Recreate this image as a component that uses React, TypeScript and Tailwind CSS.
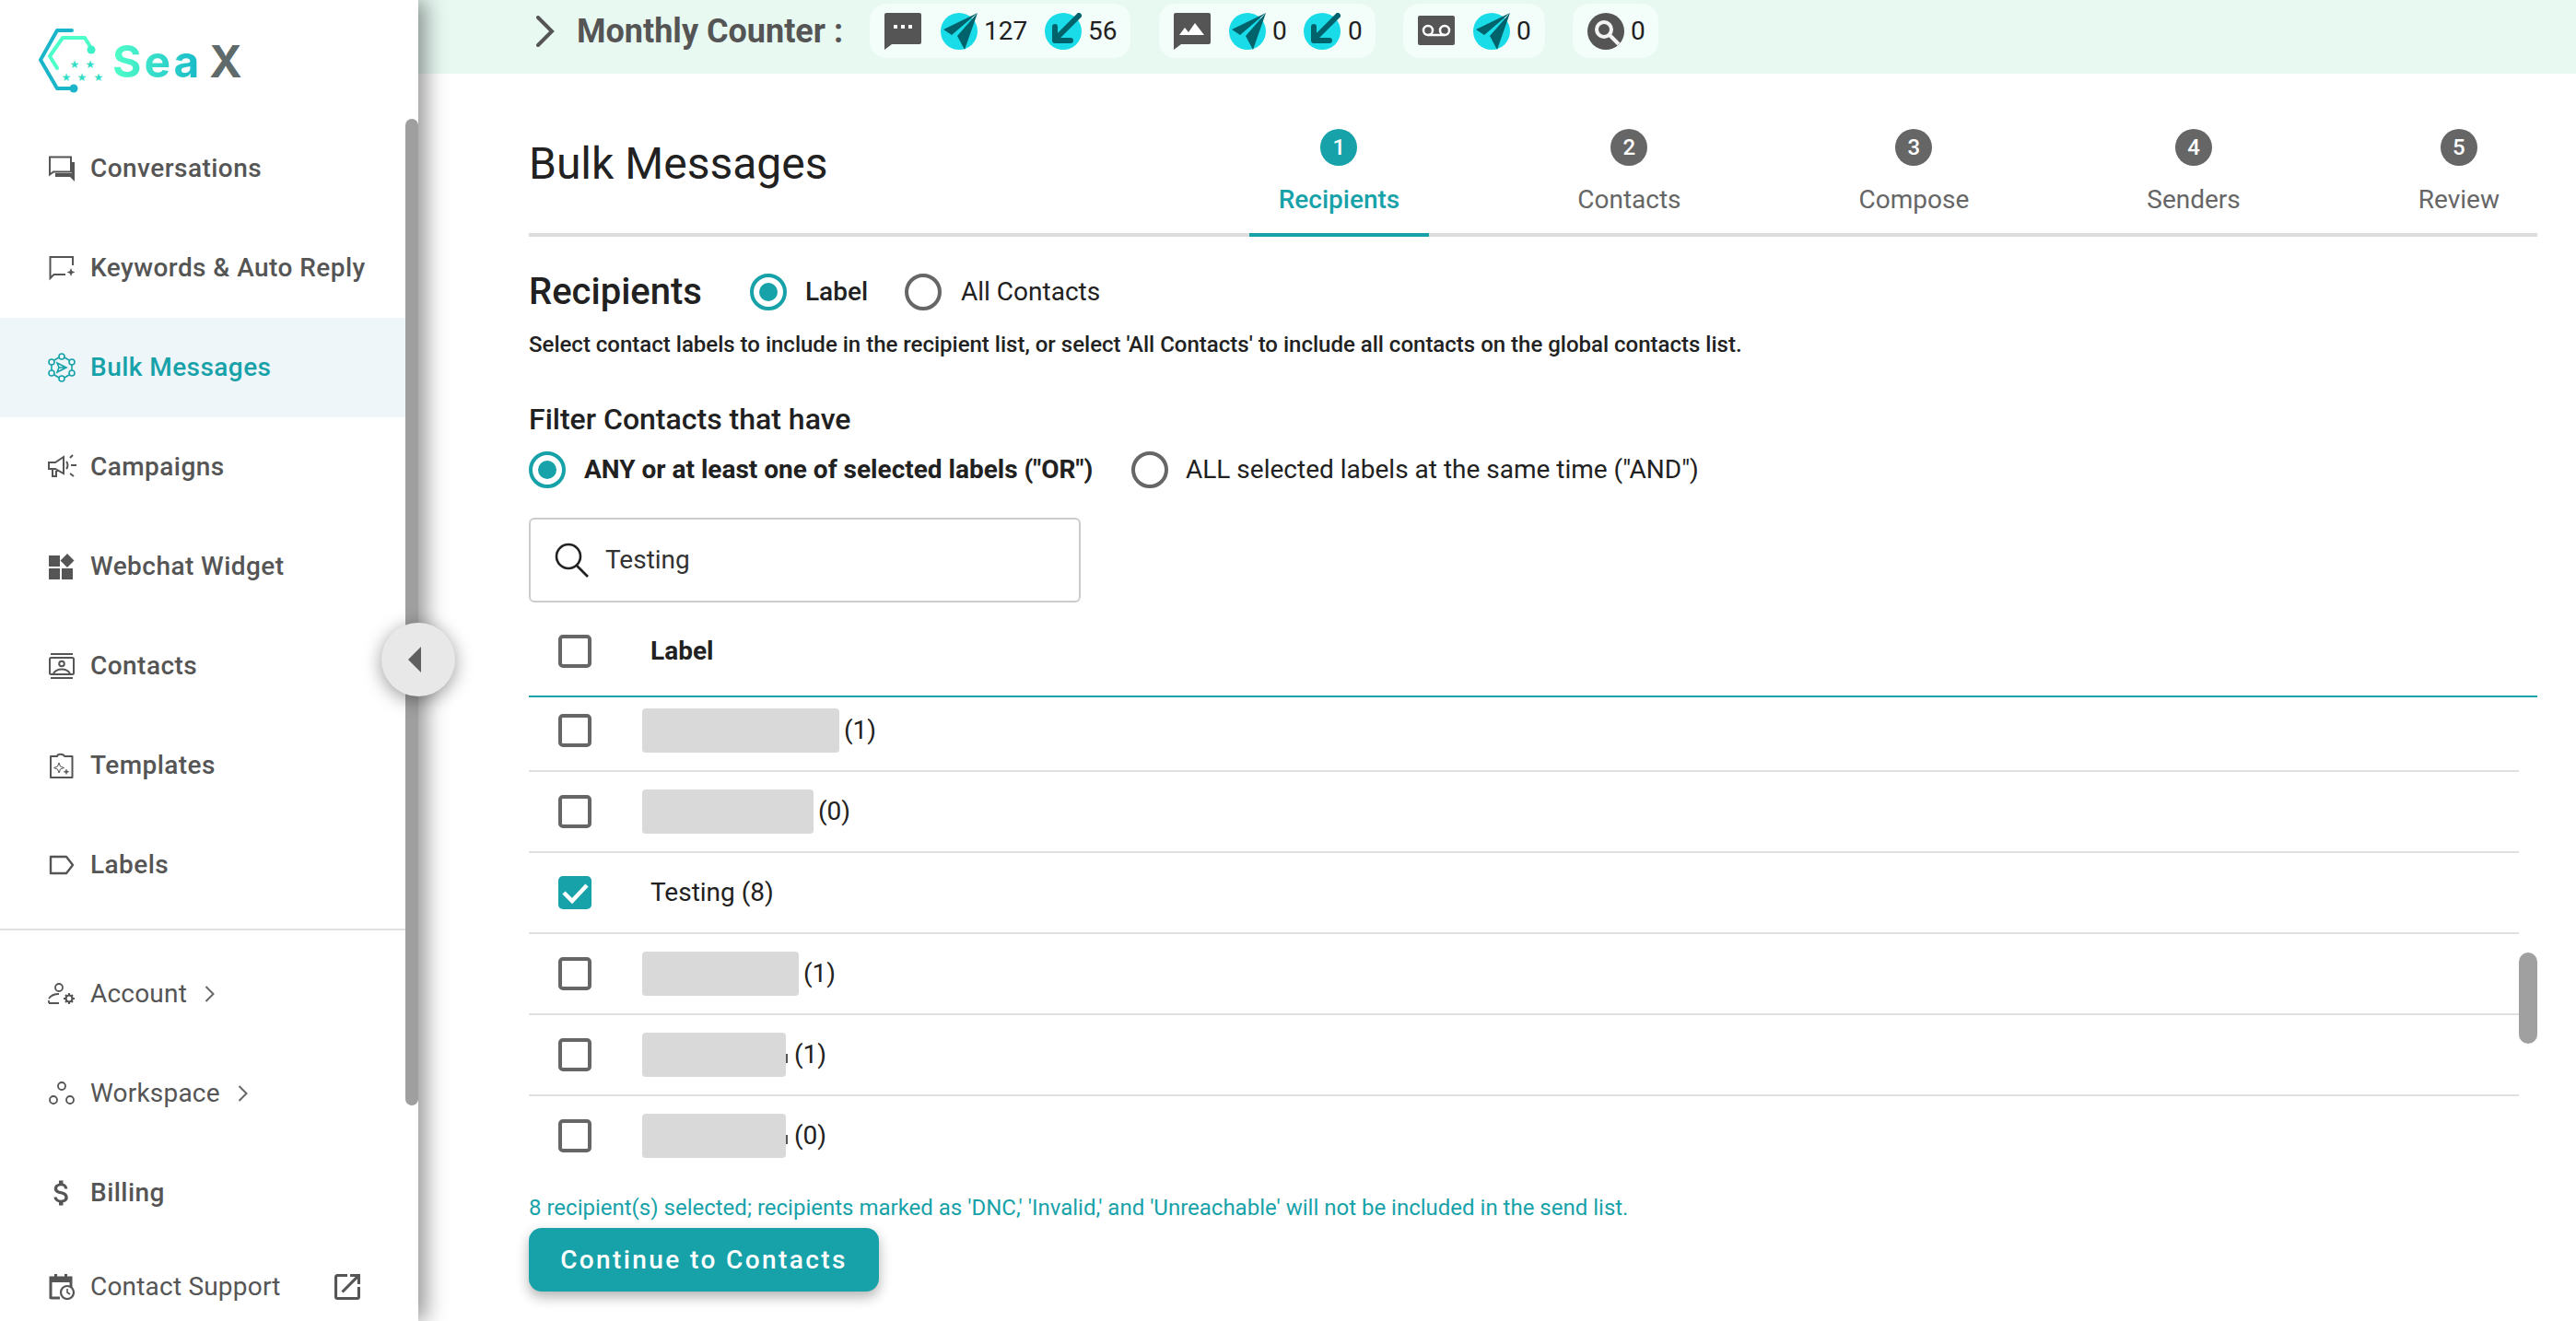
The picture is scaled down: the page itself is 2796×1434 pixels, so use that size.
import React from "react";

const TEAL = "#17a2a9";

const ConversationsIcon = () => (
  <svg viewBox="0 0 28 28" className="w-[28px] h-[28px] shrink-0" fill="none">
    <path d="M1 1.500h23v16H5l-4 3z" stroke="#555" strokeWidth="2" />
    <path d="M25 7h3v21l-5-5H7v-4h18z" fill="#555" />
  </svg>
);

const KeywordsIcon = () => (
  <svg viewBox="0 0 28 28" className="w-[28px] h-[28px] shrink-0" fill="none">
    <path d="M26 11V2H1.500v23l4-4H18" stroke="#555" strokeWidth="2" />
    <path d="M24 14l1.300 3.200 3.200 1.300-3.200 1.300L24 23l-1.300-3.200-3.200-1.300 3.200-1.300z" fill="#555" />
  </svg>
);

const BulkIcon = () => (
  <svg viewBox="0 0 30 32" className="w-[30px] h-[32px] shrink-0" fill="none" stroke={TEAL} strokeWidth="1.600">
    <circle cx="15" cy="4" r="3" />
    <circle cx="15" cy="28" r="3" />
    <circle cx="4" cy="10" r="3" />
    <circle cx="26" cy="10" r="3" />
    <circle cx="4" cy="22" r="3" />
    <circle cx="26" cy="22" r="3" />
    <path d="M7 8l5-3M18 5l5 3M4 13v6M26 13v6M7 24l5 3M18 27l5-3" />
    <path d="M10 11l10 5-10 5 2-5zM12 16h6" />
  </svg>
);

const CampaignsIcon = () => (
  <svg viewBox="0 0 32 28" className="w-[32px] h-[28px] shrink-0" fill="none" stroke="#555" strokeWidth="2">
    <path d="M2 9h7l9-6v18l-9-5H2zM6 16v8h4v-8" />
    <path d="M21 8c2 2 2 6 0 8M26 12h6M25 4l3-3M25 21l4 3" />
  </svg>
);

const WidgetIcon = () => (
  <svg viewBox="0 0 28 28" className="w-[28px] h-[28px] shrink-0" fill="#555">
    <path d="M0 2h12v12H0zM0 16h12v12H0zM14 16h12v12H14zM20 0l7.500 7.500L20 15l-7.500-7.500z" />
  </svg>
);

const ContactsIcon = () => (
  <svg viewBox="0 0 28 28" className="w-[28px] h-[28px] shrink-0" fill="none" stroke="#555" strokeWidth="2">
    <path d="M2 1h24M2 27h24" />
    <rect x="1" y="5" width="26" height="18" rx="1.500" />
    <circle cx="14" cy="11.500" r="2.800" />
    <path d="M5 22c2-3 5-4.500 9-4.500s7 1.500 9 4.500" />
  </svg>
);

const TemplatesIcon = () => (
  <svg viewBox="0 0 28 28" className="w-[28px] h-[28px] shrink-0" fill="none" stroke="#555" strokeWidth="2">
    <path d="M2 4h7c.5-3 7-3 8 0h8.500v23H2z" strokeLinejoin="round" />
    <path d="M11 11l1.500 4 4 1.500-4 1.500-1.500 4-1.500-4-4-1.500 4-1.500z" strokeWidth="1" />
    <path d="M19 18l.8 2 2 .8-2 .8-.8 2-.8-2-2-.8 2-.8z" fill="#555" strokeWidth="0.500" />
  </svg>
);

const LabelsIcon = () => (
  <svg viewBox="0 0 28 22" className="w-[28px] h-[22px] shrink-0" fill="none" stroke="#555" strokeWidth="2.400">
    <path d="M2 2h17l7 9-7 9H2z" strokeLinejoin="round" />
  </svg>
);

const AccountIcon = () => (
  <svg viewBox="0 0 30 24" className="w-[30px] h-[24px] shrink-0" fill="none" stroke="#555" strokeWidth="1.800">
    <circle cx="12" cy="5" r="4" />
    <path d="M1 17c2-3 6-5 11-5M1 22h11M1 22v-3" />
    <circle cx="23" cy="17" r="3.500" strokeWidth="2.200" />
    <path d="M23 11v2M23 21v2M17 17h2M27 17h2M19 13l1.500 1.500M25.500 19.500L27 21M19 21l1.500-1.500M25.500 14.500L27 13" strokeWidth="2" />
  </svg>
);

const WorkspaceIcon = () => (
  <svg viewBox="0 0 28 26" className="w-[28px] h-[26px] shrink-0" fill="none" stroke="#555" strokeWidth="1.800">
    <circle cx="14" cy="5" r="4" />
    <circle cx="5" cy="20" r="4" />
    <circle cx="23" cy="20" r="4" />
  </svg>
);

const BillingIcon = () => (
  <svg viewBox="0 0 24 24" className="w-[36px] h-[36px] shrink-0" fill="#555">
    <path d="M11.800 10.900c-2.270-.59-3-1.200-3-2.150 0-1.090 1.010-1.850 2.700-1.850 1.780 0 2.440.85 2.500 2.100h2.210c-.07-1.720-1.120-3.300-3.210-3.810V3h-3v2.160c-1.940.42-3.500 1.680-3.500 3.610 0 2.310 1.910 3.460 4.700 4.130 2.500.6 3 1.480 3 2.410 0 .69-.49 1.790-2.700 1.790-2.060 0-2.870-.92-2.980-2.100h-2.200c.12 2.190 1.760 3.420 3.680 3.830V21h3v-2.150c1.950-.37 3.500-1.500 3.500-3.550 0-2.840-2.430-3.810-4.700-4.400z" />
  </svg>
);

const SupportIcon = () => (
  <svg viewBox="0 0 28 28" className="w-[28px] h-[28px] shrink-0" fill="none">
    <path d="M2 27V4h22v10" stroke="#555" strokeWidth="3" />
    <path d="M2 3h22v6H2zM6 0h3v4H6zM17 0h3v4h-3z" fill="#555" />
    <path d="M2 26h10" stroke="#555" strokeWidth="3" />
    <circle cx="20" cy="20" r="7" fill="#fff" stroke="#555" strokeWidth="2.200" />
    <path d="M20 16v4l3 2" stroke="#555" strokeWidth="1.600" />
  </svg>
);

const ExternalIcon = () => (
  <svg viewBox="3 3 18 18" className="w-[28px] h-[28px] shrink-0" fill="#555">
    <path d="M19 19H5V5h7V3H5c-1.110 0-2 .9-2 2v14c0 1.100.89 2 2 2h14c1.100 0 2-.9 2-2v-7h-2v7zM14 3v2h3.590l-9.830 9.830 1.410 1.410L19 6.410V10h2V3h-7z" />
  </svg>
);

const SmallChevron = () => (
  <svg viewBox="0 0 12 20" className="w-[12px] h-[20px]" fill="none" stroke="#666" strokeWidth="2">
    <path d="M1.500 2l8 8-8 8" />
  </svg>
);

const SendCircle = () => (
  <svg viewBox="0 0 40 40" className="w-[40px] h-[40px] shrink-0">
    <circle cx="20" cy="20" r="20" fill="#19dce8" />
    <path d="M40 0L3 18l9 6zM40 0L18 25l8 15z" fill="#00636b" />
  </svg>
);

const ReceiveCircle = () => (
  <svg viewBox="0 0 40 40" className="w-[40px] h-[40px] shrink-0">
    <circle cx="20" cy="20" r="20" fill="#19dce8" />
    <path d="M37 3L13 27M11 15v15h17" fill="none" stroke="#00636b" strokeWidth="6" strokeLinecap="round" strokeLinejoin="round" />
  </svg>
);

const BubbleDots = () => (
  <svg viewBox="0 0 40 40" className="w-[40px] h-[40px] shrink-0">
    <path d="M2 0h36a2 2 0 0 1 2 2v30a2 2 0 0 1-2 2H8l-8 6V2a2 2 0 0 1 2-2z" fill="#555" />
    <path d="M10 13h4v4h-4zM18 13h4v4h-4zM26 13h4v4h-4z" fill="#fff" />
  </svg>
);

const BubbleImage = () => (
  <svg viewBox="0 0 40 40" className="w-[40px] h-[40px] shrink-0">
    <path d="M2 0h36a2 2 0 0 1 2 2v30a2 2 0 0 1-2 2H8l-8 6V2a2 2 0 0 1 2-2z" fill="#555" />
    <path d="M6 24l6-8 4 5 7-10 10 13z" fill="#fff" />
  </svg>
);

const VoicemailSquare = () => (
  <svg viewBox="0 0 40 40" className="w-[40px] h-[40px] shrink-0">
    <rect x="0" y="3" width="40" height="32" rx="2" fill="#555" />
    <circle cx="11" cy="19" r="5" fill="none" stroke="#fff" strokeWidth="2.500" />
    <circle cx="29" cy="19" r="5" fill="none" stroke="#fff" strokeWidth="2.500" />
    <path d="M11 24h18" stroke="#fff" strokeWidth="2.500" />
  </svg>
);

const SearchCircle = () => (
  <svg viewBox="0 0 40 40" className="w-[40px] h-[40px] shrink-0">
    <circle cx="20" cy="20" r="20" fill="#555" />
    <circle cx="18" cy="18" r="8" fill="none" stroke="#f4f4f4" strokeWidth="4" />
    <path d="M24 24l10 10" stroke="#f4f4f4" strokeWidth="4" />
  </svg>
);

const Logo = () => (
  <div className="flex items-center h-[129px] pl-[42px] pt-[4px]">
    <svg viewBox="0 0 72 72" className="w-[72px] h-[72px] shrink-0" fill="none">
      <path d="M36 2H20L2 34l18 31h20" stroke="#1ab5c9" strokeWidth="4" strokeLinecap="round" strokeLinejoin="round" />
      <circle cx="38" cy="65" r="4.500" fill="#1ab5c9" />
      <path d="M20 43L12 30l14-20h24l8 13" stroke="#4dffc9" strokeWidth="4" strokeLinecap="round" strokeLinejoin="round" />
      <circle cx="57" cy="23" r="4.500" fill="#3ef0c8" />
      <g fill="#2fdcc4" fontFamily="'DejaVu Sans', sans-serif" fontSize="12" textAnchor="middle">
        <text x="39" y="43">★</text>
        <text x="56" y="43">★</text>
        <text x="30" y="57">★</text>
        <text x="47" y="57">★</text>
        <text x="65" y="57">★</text>
      </g>
    </svg>
    <span className="ml-[8px] text-[48px] leading-none tracking-[3px] font-bold font-['Inter',sans-serif] bg-gradient-to-r from-[#50ffc8] to-[#14b8c8] bg-clip-text text-transparent">
      Sea
    </span>
    <span className="ml-[8px] text-[48px] leading-none font-bold font-['Inter',sans-serif] text-[#5f6b6b]">X</span>
  </div>
);

const navTop = [
  { label: "Conversations", icon: <ConversationsIcon /> },
  { label: "Keywords & Auto Reply", icon: <KeywordsIcon /> },
  { label: "Bulk Messages", icon: <BulkIcon />, active: true },
  { label: "Campaigns", icon: <CampaignsIcon /> },
  { label: "Webchat Widget", icon: <WidgetIcon /> },
  { label: "Contacts", icon: <ContactsIcon /> },
  { label: "Templates", icon: <TemplatesIcon /> },
  { label: "Labels", icon: <LabelsIcon /> },
];

const NavItem = ({ label, icon, active, medium = true, h = "h-[108px]", children }: any) => (
  <div className={`flex items-center w-[440px] ${h} ${active ? "bg-[#eef6f9] text-[#17a2a9]" : "text-[#555]"}`}>
    <div className="w-[98px] pl-[52px] shrink-0 flex items-center">
      <div className="w-[30px] flex justify-center">{icon}</div>
    </div>
    <span className={`text-[28px] ${medium ? "font-medium tracking-[0.45px]" : "font-normal tracking-[0.2px]"}`}>{label}</span>
    {children}
  </div>
);

const Sidebar = () => (
  <aside className="relative z-20 w-[454px] shrink-0 h-full bg-white overflow-visible shadow-[8px_0_22px_rgba(0,0,0,0.42)]">
    <div className="h-full overflow-hidden">
      <Logo />
      {navTop.map((item) => (
        <NavItem key={item.label} {...item} />
      ))}
      <div className="w-[440px] mt-[15px] border-b-2 border-[#e0e0e0]" />
      <div className="h-[15px]" />
      <NavItem label="Account" icon={<AccountIcon />} medium={false}>
        <span className="ml-[19px] flex"><SmallChevron /></span>
      </NavItem>
      <NavItem label="Workspace" icon={<WorkspaceIcon />} medium={false}>
        <span className="ml-[19px] flex"><SmallChevron /></span>
      </NavItem>
      <NavItem label="Billing" icon={<BillingIcon />} />
      <NavItem label="Contact Support" icon={<SupportIcon />} medium={false} h="h-[96px]">
        <span className="ml-[58px] flex"><ExternalIcon /></span>
      </NavItem>
    </div>
    {/* sidebar scroll thumb */}
    <div className="absolute top-[129px] right-0 w-[14px] h-[1071px] rounded-[7px] bg-[#9f9f9f]" />
    {/* collapse handle */}
    <div className="absolute top-[676px] left-[414px] w-[80px] h-[80px] rounded-full bg-[#e8e8e8] shadow-[0_4px_20px_rgba(0,0,0,0.4)] flex items-center justify-center">
      <div className="w-0 h-0 -ml-[8px] border-y-[14px] border-y-transparent border-r-[14px] border-r-[#5f5f5f]" />
    </div>
  </aside>
);

const Pill = ({ children, className }: any) => (
  <div className={`flex items-center h-[59px] rounded-[18px] bg-[#f3fdfa] ${className}`}>{children}</div>
);

const Count = ({ children, className }: any) => (
  <span className={`text-[28px] text-[#212121] ${className}`}>{children}</span>
);

const TopBar = () => (
  <div className="flex items-center h-[80px] bg-[#e8f9f2] pl-[128px] pb-[13px] shrink-0">
    <svg viewBox="0 0 20 34" className="w-[20px] h-[34px] shrink-0" fill="none" stroke="#555" strokeWidth="4" strokeLinecap="round">
      <path d="M2 2l15 15L2 32" />
    </svg>
    <span className="ml-[24px] w-[318px] text-[36px] font-bold text-[#555]">Monthly Counter :</span>
    <Pill className="w-[283px] pl-[16px]">
      <BubbleDots />
      <span className="w-[21px]" />
      <SendCircle />
      <Count className="ml-[7px] w-[66px]">127</Count>
      <ReceiveCircle />
      <Count className="ml-[7px]">56</Count>
    </Pill>
    <Pill className="w-[235px] ml-[31px] pl-[16px]">
      <BubbleImage />
      <span className="w-[20px]" />
      <SendCircle />
      <Count className="ml-[7px] w-[34px]">0</Count>
      <ReceiveCircle />
      <Count className="ml-[8px]">0</Count>
    </Pill>
    <Pill className="w-[154px] ml-[30px] pl-[16px]">
      <VoicemailSquare />
      <span className="w-[20px]" />
      <SendCircle />
      <Count className="ml-[7px]">0</Count>
    </Pill>
    <Pill className="w-[93px] ml-[30px] pl-[16px]">
      <SearchCircle />
      <Count className="ml-[7px]">0</Count>
    </Pill>
  </div>
);

const steps = ["Recipients", "Contacts", "Compose", "Senders", "Review"];

const Stepper = () => (
  <div className="flex items-start h-[129px] border-b-4 border-[#dddddd] -mb-[4px]">
    <h1 className="mt-[18px] text-[48px] leading-[64px] font-normal text-[#212121]">Bulk Messages</h1>
    <div className="ml-auto mr-[9px] flex gap-[129px]">
      {steps.map((s, i) => (
        <div
          key={s}
          className={`flex flex-col items-center h-[129px] px-[32px] pt-[12px] ${
            i === 0 ? "border-b-4 border-[#17a2a9]" : ""
          }`}
        >
          <div className={`w-[40px] h-[40px] rounded-full flex items-center justify-center text-white text-[24px] font-medium ${i === 0 ? "bg-[#17a2a9]" : "bg-[#666]"}`}>
            {i + 1}
          </div>
          <span className={`mt-[15px] text-[28px] leading-[44px] ${i === 0 ? "text-[#17a2a9] font-medium" : "text-[#666]"}`}>{s}</span>
        </div>
      ))}
    </div>
  </div>
);

const Radio = ({ on }: { on?: boolean }) => (
  <span className={`w-[40px] h-[40px] shrink-0 rounded-full border-[4px] flex items-center justify-center ${on ? "border-[#17a2a9]" : "border-[#666]"}`}>
    {on && <span className="w-[20px] h-[20px] rounded-full bg-[#17a2a9]" />}
  </span>
);

const Checkbox = ({ on }: { on?: boolean }) =>
  on ? (
    <span className="w-[36px] h-[36px] shrink-0 rounded-[5px] bg-[#17a2a9] flex items-center justify-center">
      <svg viewBox="0 0 36 36" className="w-[36px] h-[36px]" fill="none" stroke="#fff" strokeWidth="4.500">
        <path d="M6 18l9 9L31 10" />
      </svg>
    </span>
  ) : (
    <span className="w-[36px] h-[36px] shrink-0 rounded-[5px] border-[4px] border-[#666]" />
  );

const rows = [
  { w: "w-[214px]", count: "(1)", gap: "ml-[5px]" },
  { w: "w-[186px]", count: "(0)", gap: "ml-[5px]" },
  { text: "Testing (8)", on: true },
  { w: "w-[170px]", count: "(1)", gap: "ml-[5px]" },
  { w: "w-[156px]", count: "(1)", gap: "ml-[9px]", stray: true },
  { w: "w-[156px]", count: "(0)", gap: "ml-[9px]", stray: true },
];

const LabelTable = () => (
  <div className="relative">
    <div className="flex items-center h-[103px] pt-[5px] pl-[32px] border-b-2 border-[#17a2a9]">
      <Checkbox />
      <span className="ml-[64px] text-[28px] font-bold text-[#212121]">Label</span>
    </div>
    <div className="h-[504px] overflow-hidden pr-[20px]">
      <div className="-mt-[7px]">
        {rows.map((r, i) => (
          <div key={i} className="flex items-center h-[88px] pl-[32px] border-b-2 border-[#e0e0e0]">
            <Checkbox on={r.on} />
            {r.text ? (
              <span className="ml-[64px] text-[28px] text-[#212121]">{r.text}</span>
            ) : (
              <>
                <span className={`ml-[55px] h-[48px] rounded-[4px] bg-[#d9d9d9] ${r.w}`} />
                {r.stray && <span className="-mr-[2px] mt-[8px] w-[2px] h-[10px] bg-[#555]" />}
                <span className={`${r.gap} text-[28px] text-[#212121]`}>{r.count}</span>
              </>
            )}
          </div>
        ))}
      </div>
    </div>
    {/* table scroll thumb */}
    <div className="absolute top-[380px] right-0 w-[20px] h-[99px] rounded-[10px] bg-[#a0a0a0]" />
  </div>
);

const Content = () => (
  <div className="flex-1 pl-[120px] pr-[42px] pt-[48px] overflow-hidden bg-white">
    <Stepper />
    <div className="flex items-center h-[40px] mt-[44px]">
      <span className="w-[240px] text-[40px] font-medium text-[#212121]">Recipients</span>
      <Radio on />
      <span className="ml-[20px] w-[108px] text-[28px] font-medium text-[#212121]">Label</span>
      <Radio />
      <span className="ml-[21px] text-[28px] text-[#212121]">All Contacts</span>
    </div>
    <p className="mt-[21px] h-[32px] text-[24px] leading-[32px] font-medium text-[#212121]">
      Select contact labels to include in the recipient list, or select 'All Contacts' to include all contacts on the global contacts list.
    </p>
    <div className="mt-[45px] h-[40px] flex items-center text-[32px] font-medium text-[#212121]">Filter Contacts that have</div>
    <div className="flex items-center h-[40px] mt-[15px]">
      <Radio on />
      <span className="ml-[20px] w-[594px] text-[28px] font-bold text-[#212121]">ANY or at least one of selected labels ("OR")</span>
      <Radio />
      <span className="ml-[19px] text-[28px] text-[#212121]">ALL selected labels at the same time ("AND")</span>
    </div>
    <div className="mt-[32px] w-[599px] h-[92px] flex items-center pl-[26px] rounded-[6px] border-2 border-[#cccccc]">
      <svg viewBox="0 0 38 38" className="w-[38px] h-[38px]" fill="none" stroke="#212121" strokeWidth="2.600">
        <circle cx="15" cy="15" r="13" />
        <path d="M24 25l12 12" />
      </svg>
      <span className="ml-[17px] text-[28px] text-[#333]">Testing</span>
    </div>
    <LabelTable />
    <p className="mt-[34px] h-[32px] text-[24px] leading-[32px] text-[#17a2a9]">
      8 recipient(s) selected; recipients marked as 'DNC,' 'Invalid,' and 'Unreachable' will not be included in the send list.
    </p>
    <button className="mt-[6px] w-[380px] h-[69px] rounded-[14px] bg-[#17a2a9] text-white text-[28px] font-medium tracking-[2.400px] shadow-[0_6px_14px_rgba(0,0,0,0.3)]">
      Continue to Contacts
    </button>
  </div>
);

const App: React.FC = () => {
  return (
    <div className="flex w-[2796px] h-[1434px] overflow-hidden bg-white font-['Roboto',sans-serif]">
      <Sidebar />
      <main className="flex-1 min-w-0 flex flex-col h-full">
        <TopBar />
        <Content />
      </main>
    </div>
  );
};

export default App;
